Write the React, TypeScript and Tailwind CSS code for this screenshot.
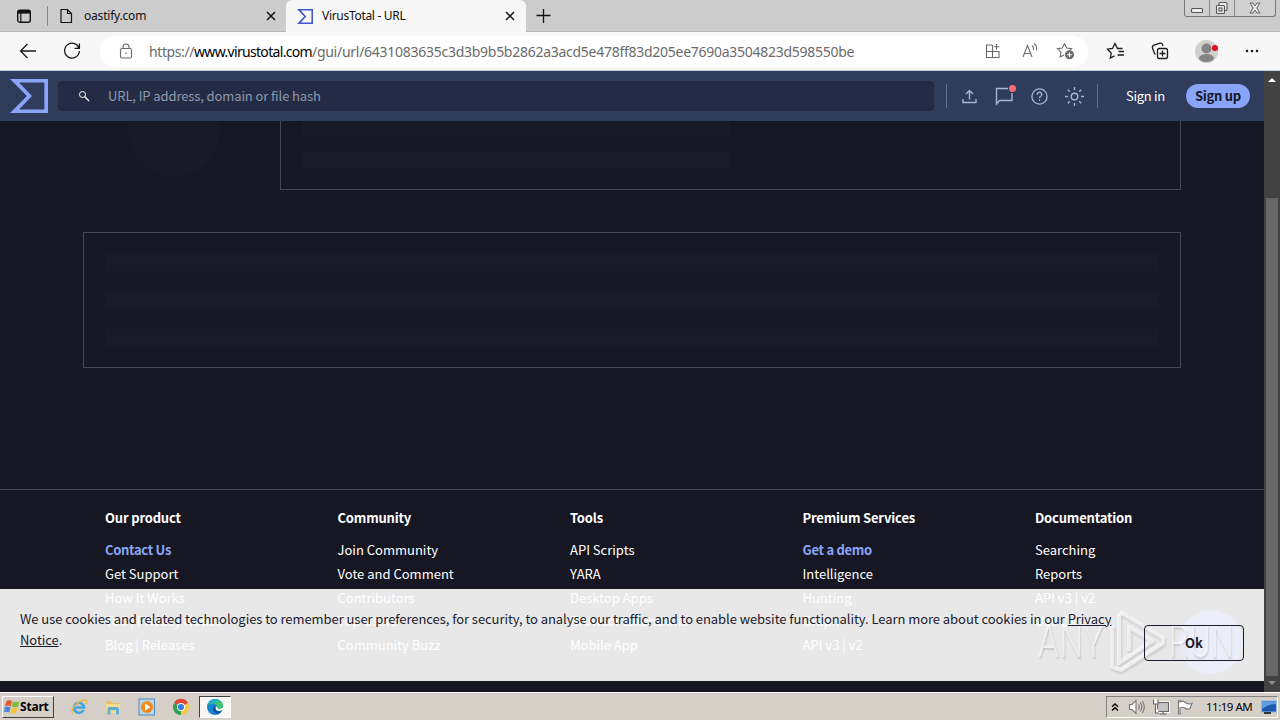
import { ReactNode } from "react";
import { clsx } from "clsx";

interface FooterColumn {
  title: string;
  links: string[];
  highlighted?: string;
}

const footerColumns: FooterColumn[] = [
  {
    title: "Our product",
    highlighted: "Contact Us",
    links: ["Contact Us", "Get Support", "How It Works", "ToS | Privacy Notice", "Blog | Releases"],
  },
  {
    title: "Community",
    links: ["Join Community", "Vote and Comment", "Contributors", "Top Users", "Community Buzz"],
  },
  {
    title: "Tools",
    links: ["API Scripts", "YARA", "Desktop Apps", "Browser Extensions", "Mobile App"],
  },
  {
    title: "Premium Services",
    highlighted: "Get a demo",
    links: ["Get a demo", "Intelligence", "Hunting", "Graph", "API v3 | v2"],
  },
  {
    title: "Documentation",
    links: ["Searching", "Reports", "API v3 | v2", "Use Cases"],
  },
];

interface IconProps {
  size?: number;
  className?: string;
  children: ReactNode;
}

// Stroke icon on a box whose units are pixels
const Icon = ({ size = 20, className, children }: IconProps) => (
  <svg
    width={size}
    height={size}
    viewBox={`0 0 ${size} ${size}`}
    fill="none"
    stroke="currentColor"
    strokeWidth={1.1}
    className={clsx("block shrink-0", className)}
  >
    {children}
  </svg>
);

const SigmaLogo = ({ className }: { className?: string }) => (
  <svg viewBox="0 0 38 34" preserveAspectRatio="none" fill="currentColor" className={className}>
    <path fillRule="evenodd" d="M0 0H38V34H0L17 17ZM9 3.5L22 17L9 30.5H34.3V3.5Z" />
  </svg>
);

const CloseIcon = () => (
  <Icon size={10}>
    <path d="M1 1L9 9M9 1L1 9" strokeWidth={1.5} />
  </Icon>
);

const WindowButtons = () => (
  <div className="ml-auto mr-[4px] flex h-[17px] rounded-b-[3px] border border-t-0 border-[#777] bg-[#d0d0d0] text-[#555]">
    <div className="w-[25px] border-r border-[#888]">
      <Icon size={24}>
        <rect x="6.5" y="8.5" width="11" height="4" rx="1" fill="#eee" />
      </Icon>
    </div>
    <div className="flex w-[25px] justify-center border-r border-[#888]">
      <Icon size={16}>
        <rect x="5" y="2.5" width="8" height="8" rx="1" fill="#eee" />
        <rect x="2.5" y="5.5" width="8" height="8" rx="1" fill="#eee" />
        <rect x="5" y="8" width="3" height="3" />
      </Icon>
    </div>
    <div className="flex w-[40px] justify-center">
      <Icon size={16}>
        <path d="M3 3h3l2 3 2-3h3l-3.3 5L13 13h-3l-2-3-2 3H3l3.3-5z" fill="#eee" strokeWidth={0.9} />
      </Icon>
    </div>
  </div>
);

const TabStrip = () => (
  <div className="flex h-[32px] bg-[#cccccc] text-[12px] text-[#111]">
    <div className="flex h-[32px] w-[286px] items-center border-b border-[#b8b8b8] pl-[17px]">
      <Icon size={14}>
        <rect x="0.7" y="1.2" width="12.6" height="12" rx="2" strokeWidth={1.4} />
        <path d="M1 3H13" strokeWidth={3.2} />
        <path d="M3.8 3V13" strokeWidth={1.2} />
      </Icon>
      <div className="ml-[16px] h-[20px] w-px bg-[#888]" />
      <Icon size={16} className="ml-[10px]">
        <path d="M3 1.5H9.5L13.5 5.5V14.5H3ZM9.5 1.5V5.5H13.5" strokeWidth={1.2} />
      </Icon>
      <span className="ml-[10px] mr-auto tracking-[-0.2px]">oastify.com</span>
      <div className="mr-[10px]">
        <CloseIcon />
      </div>
    </div>
    <div className="flex w-[240px] items-center rounded-t-[6px] bg-[#f7f7f7] pl-[11px]">
      <SigmaLogo className="h-[15px] w-[16px] text-[#3f57d0]" />
      <span className="ml-[9px] mr-auto tracking-[-0.3px]">VirusTotal - URL</span>
      <div className="mr-[11px]">
        <CloseIcon />
      </div>
    </div>
    <div className="flex flex-1 border-b border-[#b8b8b8]">
      <Icon size={16} className="ml-[10px] mt-[8px]">
        <path d="M7.5 1V15M0.5 7.5H14.5" strokeWidth={1.3} />
      </Icon>
      <WindowButtons />
    </div>
  </div>
);

const Toolbar = () => (
  <div className="flex h-[39px] items-center border-b border-[#c3cede] bg-[#f7f7f7] text-[#1b1b1b]">
    <Icon size={20} className="ml-[18px]">
      <path d="M18 10H2.5M9.5 3L2.5 10L9.5 17" strokeWidth={1.3} />
    </Icon>
    <Icon size={20} className="ml-[24px]">
      <path d="M17 7.2A7.4 7.4 0 1 0 17.4 10M17.4 2.5V7.3H12.5" strokeWidth={1.3} />
    </Icon>
    <div className="ml-[18px] flex h-[31px] w-[988px] items-center rounded-full bg-white text-[#6b6b6b]">
      <Icon size={16} className="ml-[18px]">
        <rect x="2.5" y="5.5" width="11" height="9.5" rx="1.5" />
        <path d="M5 5.5V4A3 3 0 0 1 11 4V5.5" />
        <circle cx="8" cy="10.2" r="0.8" fill="currentColor" stroke="none" />
      </Icon>
      <div className="ml-[15px] mr-auto whitespace-nowrap text-[14px] tracking-[-0.27px]">
        <span className="tracking-[-0.4px]">https://</span>
        <span className="tracking-[-0.68px] text-black">www.virustotal.com</span>
        /gui/url/6431083635c3d3b9b5b2862a3acd5e478ff83d205ee7690a3504823d598550be
      </div>
      <Icon size={16}>
        <path d="M7 2H1.5V14.5H14V8.5H1.5M7.5 2V14.5M11.5 1V6.5M8.8 3.7H14.5" />
      </Icon>
      <Icon size={18} className="ml-[20px]">
        <path d="M2 15L6.5 3.5L11 15M3.5 11.5H9.5M11 3.5Q13 5 12.5 8M13 1.5Q16.5 4 15.5 8.5" />
      </Icon>
      <Icon size={20} className="ml-[17px] mr-[12px]">
        <path d="M8.5 2.5L10.7 7L15.7 7.7L12 11.2M8.5 2.5L6.3 7L1.5 7.7L5 11.2L4.2 16L8 14" />
        <circle cx="13.5" cy="13.8" r="4.5" fill="currentColor" stroke="none" />
        <path d="M13.5 11.5V16M11.2 13.8H15.8" stroke="#fff" />
      </Icon>
    </div>
    <Icon size={20} className="ml-[18px]">
      <path d="M16.5 7.5H11.5L9 2.5L6.5 7.5L1.5 8.2L5.2 12L4.3 17L8.5 14.8M12.5 10.5H18M11.5 14H18" strokeWidth={1.3} />
    </Icon>
    <Icon size={20} className="ml-[24px]">
      <rect x="7.5" y="7.5" width="10" height="10" rx="2" strokeWidth={1.3} />
      <path d="M12.5 9.5V15.5M9.5 12.5H15.5M5.5 13.5L4.5 12.5L2.5 7Q2 5 4 4.2L10 2.2Q12 1.8 12.5 3.5L13 5" strokeWidth={1.3} />
    </Icon>
    <div className="ml-[25px] h-[23px] w-[23px] overflow-hidden rounded-full bg-[#d2d0ce]">
      <svg viewBox="0 0 23 23" className="h-[23px] w-[23px]" fill="#868482">
        <circle cx="11.5" cy="8.5" r="5" />
        <ellipse cx="11.5" cy="18" rx="7.5" ry="4" />
      </svg>
    </div>
    <div className="z-10 ml-[-6px] mt-[-6px] h-[6px] w-[6px] rounded-full bg-[#e00b1c]" />
    <Icon size={16} className="ml-[26px]">
      <g fill="currentColor" stroke="none">
        <circle cx="3" cy="8" r="1.3" />
        <circle cx="8" cy="8" r="1.3" />
        <circle cx="13" cy="8" r="1.3" />
      </g>
    </Icon>
  </div>
);

const SiteHeader = () => (
  <header className="flex h-[50px] shrink-0 items-center bg-[#2f3c5c] text-[13px] text-[#a9b6d6]">
    <SigmaLogo className="ml-[10px] h-[34px] w-[38px] text-[#89a5f9]" />
    <div className="ml-[10px] flex h-[30px] w-[876px] items-center rounded-[4px] bg-[#232c44]">
      <Icon size={12} className="ml-[20px] text-white">
        <circle cx="4.5" cy="4.5" r="3" strokeWidth={1} />
        <path d="M6.8 6.8L11 11" strokeWidth={1.3} />
      </Icon>
      <span className="ml-[18px] tracking-[-0.11px] text-[#8f98af]">URL, IP address, domain or file hash</span>
    </div>
    <div className="ml-[12px] h-[24px] w-px bg-[#5d6d96]" />
    <Icon size={16} className="ml-[14px]">
      <path d="M8.5 11.5V2.5M5 6L8.5 2.5L12 6M2 11V14.5H15V11" strokeWidth={1.4} />
    </Icon>
    <div className="relative ml-[17px]">
      <Icon size={20}>
        <path d="M14 2.5H2.5V18L5.5 14.5H18V7" strokeWidth={1.4} />
      </Icon>
      <div className="absolute right-[-2px] top-[-1px] h-[7px] w-[7px] rounded-full bg-[#fd6c75]" />
    </div>
    <Icon size={18} className="ml-[16px]">
      <circle cx="9.5" cy="9.5" r="7.6" strokeWidth={1.3} />
      <path d="M7.3 7.7A2.2 2.2 0 1 1 10.4 9.5Q9.5 10 9.5 11M9.5 12.3V13.8" strokeWidth={1.3} />
    </Icon>
    <Icon size={20} className="ml-[16px]">
      <circle cx="10.5" cy="10.5" r="3.3" strokeWidth={1.4} />
      <path
        d="M10.5 1V4M10.5 17V20M1 10.5H4M17 10.5H20M3.8 3.8L5.8 5.8M15.2 15.2L17.2 17.2M3.8 17.2L5.8 15.2M15.2 5.8L17.2 3.8"
        strokeWidth={1.4}
      />
    </Icon>
    <div className="ml-[13px] h-[24px] w-px bg-[#5d6d96]" />
    <span className="ml-[28px] w-[60px] tracking-[-0.3px] text-white">Sign in</span>
    <span className="flex h-[24px] w-[64px] items-center justify-center rounded-full bg-[#89a5f9] font-bold tracking-[-0.25px] text-[#151724]">
      Sign up
    </span>
  </header>
);

// Placeholder blocks shown until the report is loaded
const Skeleton = () => (
  <div className="h-[368px] shrink-0">
    <div className="flex h-[69px] pl-[128px]">
      <div className="h-[56px] w-[92px] rounded-b-full bg-[#171924]" />
      <div className="ml-[60px] w-[901px] border border-t-0 border-[#454759] px-[21px]">
        <div className="h-[14px] w-[428px] bg-[#181a25]" />
        <div className="mt-[17px] h-[17px] w-[428px] bg-[#181a25]" />
      </div>
    </div>
    <div className="ml-[83px] mt-[42px] flex h-[136px] w-[1098px] flex-col gap-[20px] border border-[#454759] px-[21px] pt-[20px]">
      <div className="h-[18px] bg-[#181a25]" />
      <div className="h-[18px] bg-[#181a25]" />
      <div className="h-[18px] bg-[#181a25]" />
    </div>
  </div>
);

const Footer = () => (
  <footer className="flex flex-1 border-t border-[#454759] bg-[#171723] pl-[105px] pt-[17px] text-[13px] text-white">
    {footerColumns.map(column => (
      <div key={column.title} className="w-[232.5px] shrink-0">
        <h3 className="h-[32px] font-bold leading-[22px] tracking-[-0.18px]">{column.title}</h3>
        {column.links.map(link => (
          <a
            key={link}
            className={clsx(
              "block h-[23.8px] leading-[22px]",
              link === column.highlighted && "font-bold tracking-[-0.3px] text-[#89a5f9]"
            )}
          >
            {link}
          </a>
        ))}
      </div>
    ))}
  </footer>
);

const Watermark = () => (
  <div className="flex h-[74px] w-[206px] items-center font-['Roboto',sans-serif] text-[45px] font-light tracking-[1px] text-white/60">
    <div className="absolute right-[1px] top-[5px] h-[64px] w-[64px] rounded-full bg-[#ecf1ff]/70" />
    <span className="relative w-[72px] origin-left scale-x-[0.74] [text-shadow:1px_2px_2px_rgba(0,0,0,0.15)]">ANY</span>
    <svg
      viewBox="0 0 62 70"
      className="relative ml-[-3px] h-[70px] w-[62px] shrink-0 drop-shadow-[1px_2px_1px_rgba(0,0,0,0.2)]"
      fill="none"
      stroke="currentColor"
      strokeWidth={4}
    >
      <path d="M5 18V60L14 63L56 36V31L15 6L12 9V56L45 34L22 20V44" strokeLinejoin="round" />
    </svg>
    <span className="relative w-[72px] origin-left scale-x-[0.7] [text-shadow:1px_2px_2px_rgba(0,0,0,0.15)]">RUN</span>
  </div>
);

const CookieBanner = () => (
  <div className="absolute bottom-[11px] left-0 flex h-[92px] w-full items-center bg-white/90 pl-[20px] text-[13px] text-[#1b1b2b]">
    <div className="absolute bottom-[2px] right-[20px]">
      <Watermark />
    </div>
    <p className="relative mt-[-13px] w-[1104px] whitespace-nowrap leading-[21px] tracking-[-0.06px]">
      We use cookies and related technologies to remember user preferences, for security, to analyse our traffic, and to
      enable website functionality. Learn more about cookies in our <a className="underline">Privacy<br />Notice</a>.
    </p>
    <button className="relative ml-[20px] mt-[16px] h-[36px] w-[100px] rounded-[4px] border border-[#1b1b2b] font-bold">
      Ok
    </button>
  </div>
);

const Scrollbar = () => (
  <div className="flex w-[16px] flex-col items-center bg-[#424242]">
    <div className="mt-[7px] border-x-[4px] border-b-[4px] border-x-transparent border-b-white" />
    <div className="mt-[116px] h-[478px] w-[12px] bg-[#686868]" />
    <div className="mt-[5px] border-x-[4px] border-t-[4px] border-x-transparent border-t-[#8a8a8a]" />
  </div>
);

const Taskbar = () => (
  <div className="flex h-[28px] items-center border-t border-white bg-[#d5cfc7] text-black">
    <div className="ml-[2px] flex h-[22px] w-[52px] items-center border border-b-[#404040] border-l-white border-r-[#404040] border-t-white pl-[1px]">
      <svg viewBox="0 0 16 16" className="h-[16px] w-[16px] shrink-0">
        <path d="M2.5 2Q5 0.5 8 2L6.8 7.2Q4 6 1 7.2Z" fill="#e2572b" />
        <path d="M9 2.5Q12 3.8 15.5 2.2L14 7.5Q11 8.8 7.8 7.5Z" fill="#7cb93e" />
        <path d="M0.8 8.2Q3.5 7 6.5 8.2L5.2 13.5Q2.5 12.3 0 13.3Z" fill="#4a86d8" />
        <path d="M7.5 8.5Q10.5 9.8 13.7 8.5L12.2 14Q9.5 15 6.2 13.8Z" fill="#f6c338" />
      </svg>
      <span className="text-[12px] font-bold tracking-[-0.2px]">Start</span>
    </div>
    <svg viewBox="0 0 18 18" className="ml-[16px] h-[18px] w-[18px]" fill="none">
      <path d="M13.5 12A5 5 0 1 1 14 9.5H5" stroke="#42a5df" strokeWidth={2.6} />
      <path d="M3 15.5C-1 14 6 3 15 2C18 2 17 5 16 6" stroke="#e9bb3c" strokeWidth={1.4} />
    </svg>
    <svg viewBox="0 0 18 18" className="ml-[16px] h-[18px] w-[18px]">
      <path d="M2 3H7L8.5 5H15V14H2Z" fill="#e2c468" />
      <path d="M2 6H16V15H2Z" fill="#f3dd8e" />
      <path d="M3.5 16.5V11Q3.5 9 5.5 9H13Q15 9 15 11V16.5H12V12H6.5V16.5Z" fill="#62add8" />
    </svg>
    <svg viewBox="0 0 18 18" className="ml-[16px] h-[18px] w-[18px]">
      <rect x="1" y="1" width="15.5" height="16" fill="#b7d5ed" stroke="#518cba" />
      <circle cx="9" cy="9" r="6" fill="#f28b1b" />
      <path d="M7 5.5L12.5 9L7 12.5Z" fill="#fff" />
    </svg>
    <svg viewBox="0 0 18 18" className="ml-[16px] h-[18px] w-[18px]">
      <path d="M9 9L2 5A8 8 0 0 1 16 5Z" fill="#df4535" />
      <path d="M9 9L16 5A8 8 0 0 1 9 17Z" fill="#f8cb3c" />
      <path d="M9 9V17A8 8 0 0 1 2 5Z" fill="#35a052" />
      <circle cx="9" cy="9" r="4" fill="#fff" />
      <circle cx="9" cy="9" r="3.1" fill="#3d7ce0" />
    </svg>
    <div className="ml-[9px] flex h-[22px] w-[32px] items-center justify-center border border-b-white border-l-[#404040] border-r-white border-t-[#404040] bg-[#f8f7f5]">
      <svg viewBox="0 0 18 18" className="h-[18px] w-[18px]">
        <circle cx="9" cy="9" r="8" fill="#1684ce" />
        <path d="M1.5 7Q4 1 9 1Q17 1.5 17 8Q16 12 11.5 11Q12 6.5 7.5 5.5Q4 5 1.5 7Z" fill="#42c66b" />
        <path d="M1.5 7Q4 1 9 1Q13 1 15 4Q10 2 7 5.5Q4 5 1.5 7Z" fill="#26aacb" />
        <path d="M10 8.5Q8 11 11 13Q13.5 14.2 16 13Q13 17 9.5 15Q5.5 12 8 8.5Z" fill="#0d4f9f" />
        <path d="M10 8.2Q8.8 10.5 10.5 12.2Q13.5 14 17 11.5L17.5 9Q15 12 11.5 10.8Q12 9 10 8.2Z" fill="#fff" />
      </svg>
    </div>
    <div className="ml-auto mr-[2px] flex h-[22px] w-[172px] items-center border border-b-white border-l-[#808080] border-r-white border-t-[#808080]">
      <Icon size={8} className="ml-[4px]">
        <path d="M1 3.7L4 1L7 3.7M1 7.5L4 4.8L7 7.5" strokeWidth={1.4} />
      </Icon>
      <Icon size={18} className="ml-[9px] text-[#777]">
        <path d="M1.5 6.5H4L8 2.5V15.5L4 11.5H1.5Z" fill="#fff" />
        <path d="M10.5 6.5Q12 9 10.5 11.5M12.5 4.5Q15 9 12.5 13.5M14.5 3Q18 9 14.5 15" />
      </Icon>
      <Icon size={18} className="ml-[6px] text-[#666]">
        <rect x="5.5" y="4.5" width="11" height="9" fill="#ddd" stroke="#fff" strokeWidth={3} />
        <rect x="5.5" y="4.5" width="11" height="9" fill="#c5c5c5" />
        <path d="M11 13.5V16M7.5 16H14.5" />
        <path d="M1.5 1.5V6H6V1.5M3.5 6V15H7" fill="#fff" />
      </Icon>
      <Icon size={18} className="ml-[6px] text-[#777]">
        <path d="M2.5 16V2.5H4V4Q7 2 9.5 4.5Q12 7 16 5.5L14 10.5Q11 12 9 10Q7 8.5 4 10V16Z" fill="#fff" />
      </Icon>
      <span className="ml-[12px] whitespace-nowrap text-[11.5px] tracking-[-0.5px]">11:19 AM</span>
      <svg viewBox="0 0 16 14" className="ml-auto h-[14px] w-[16px] shrink-0">
        <rect x="0.5" y="1" width="15" height="11" fill="#1d58ae" stroke="#8eb9e8" />
        <path d="M1 1.5H15V4Q7 4 1 9Z" fill="#5d9be3" />
        <rect x="3" y="12" width="7" height="2" fill="#333" />
      </svg>
    </div>
  </div>
);

const App = () => (
  <div className="flex h-[720px] w-[1280px] flex-col overflow-hidden bg-[#151722] font-['Noto_Sans',sans-serif]">
    <TabStrip />
    <Toolbar />
    <div className="flex h-[621px]">
      <div className="relative flex w-[1264px] flex-col overflow-hidden font-['Noto_Sans_CJK_SC','Noto_Sans',sans-serif]">
        <SiteHeader />
        <Skeleton />
        <Footer />
        <CookieBanner />
      </div>
      <Scrollbar />
    </div>
    <Taskbar />
  </div>
);

export default App;
